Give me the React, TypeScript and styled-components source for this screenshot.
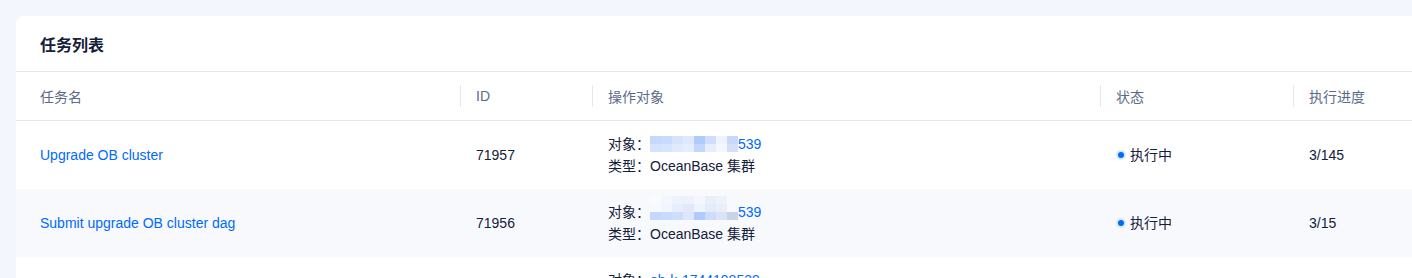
import React from 'react';
import styled, { createGlobalStyle } from 'styled-components';

const GlobalStyle = createGlobalStyle`
  html, body {
    margin: 0;
    padding: 0;
    overflow: hidden;
    background: #f3f6fc;
  }
  body {
    font-family: "Liberation Sans", "Noto Sans CJK SC", sans-serif;
    font-size: 14px;
    color: #132039;
  }
`;

const Page = styled.div`
  padding: 16px 0 0 16px;
  height: 262px;
`;

const Card = styled.div`
  width: 1600px;
  background: #fff;
  border-radius: 8px 8px 0 0;
`;

const CardHeader = styled.div`
  display: flex;
  align-items: center;
  height: 55px;
  padding: 0 24px;
  border-bottom: 1px solid #e2e8f3;
  font-size: 16px;
  font-weight: 700;
  color: #132039;
`;

const Grid = styled.div`
  display: grid;
  grid-template-columns: 444px 132px 508px 193px 1fr;
`;

const HeadCell = styled.div<{ first?: boolean }>`
  position: relative;
  display: flex;
  align-items: center;
  height: 48px;
  padding-left: ${p => (p.first ? '24px' : '16px')};
  border-bottom: 1px solid #e2e8f3;
  color: #5c6b8a;

  &::before {
    content: '';
    display: ${p => (p.first ? 'none' : 'block')};
    position: absolute;
    left: 0;
    top: 50%;
    width: 1px;
    height: 22px;
    transform: translateY(-50%);
    background: #e2e8f3;
  }
`;

const BodyCell = styled.div<{ first?: boolean; striped?: boolean }>`
  display: flex;
  flex-direction: column;
  justify-content: center;
  min-height: 44px;
  padding: 12px 0 12px ${p => (p.first ? '24px' : '16px')};
  line-height: 22px;
  background: ${p => (p.striped ? '#f8f9fd' : '#fff')};
`;

const Link = styled.a`
  color: #006aff;
  text-decoration: none;
  cursor: pointer;
`;

const Line = styled.div`
  display: flex;
  align-items: center;
  white-space: nowrap;
`;

const Mosaic = styled.span<{ lift: number }>`
  display: inline-grid;
  grid-template-columns: repeat(8, 11px);
  grid-auto-rows: 8px;
  align-self: center;
  margin-top: ${p => -p.lift}px;
`;

const Pixel = styled.span<{ c: string }>`
  background: ${p => p.c};
`;

const Status = styled.div`
  display: flex;
  align-items: center;
  gap: 6px;
`;

const Dot = styled.span`
  width: 6px;
  height: 6px;
  border-radius: 50%;
  background: #006aff;
  box-shadow: 0 0 0 2px #dbe8ff;
  margin-left: 2px;
`;

interface Task {
  name: string;
  id: string;
  target: string;
  mosaic?: string[];
  progress: string;
}

const mosaicA = [
  '#c5d8fd', '#c8dafd', '#d6e3fd', '#dfe9fd', '#b0cbfb', '#d0defd', '#eef3fe', '#c6d9fd',
  '#d3e2fe', '#d6e4fe', '#e0eafe', '#e6eefe', '#c3d6fc', '#e6eefe', '#f4f7fd', '#d3e0f7',
];

const mosaicB = [
  '#fafbfe', '#f3f6fd', '#eef2fc', '#edf1fb', '#f3f6fd', '#e9eef9', '#eef2fb', '#f8f9fd',
  '#f8f9fd', '#f2f5fd', '#e6edfb', '#e0e8fa', '#eef3fc', '#e4ebf9', '#e9eef9', '#f8f9fd',
  '#c4d7fc', '#c8dafd', '#cddefd', '#dce7fd', '#b0cbfb', '#cddcfa', '#dbe4f6', '#c9d3e6',
];

const tasks: Task[] = [
  { name: 'Upgrade OB cluster', id: '71957', target: '539', mosaic: mosaicA, progress: '3/145' },
  { name: 'Submit upgrade OB cluster dag', id: '71956', target: '539', mosaic: mosaicB, progress: '3/15' },
  { name: 'Upgrade OB cluster', id: '71955', target: 'ob-k-1744198539', progress: '3/8' },
];

const columns = ['任务名', 'ID', '操作对象', '状态', '执行进度'];

const App = () => {
  return (
    <>
      <GlobalStyle />
      <Page>
        <Card>
          <CardHeader>任务列表</CardHeader>
          <Grid>
            {columns.map((col, i) => (
              <HeadCell key={col} first={i === 0}>
                {col}
              </HeadCell>
            ))}
            {tasks.map((task, index) => {
              const striped = index % 2 === 1;
              return (
                <React.Fragment key={task.id}>
                  <BodyCell first striped={striped}>
                    <Link>{task.name}</Link>
                  </BodyCell>
                  <BodyCell striped={striped}>{task.id}</BodyCell>
                  <BodyCell striped={striped}>
                    <Line>
                      对象：
                      {task.mosaic && (
                        <Mosaic lift={task.mosaic.length > 16 ? 8 : 0}>
                          {task.mosaic.map((c, i) => (
                            <Pixel key={i} c={c} />
                          ))}
                        </Mosaic>
                      )}
                      <Link>{task.target}</Link>
                    </Line>
                    <Line>类型：OceanBase 集群</Line>
                  </BodyCell>
                  <BodyCell striped={striped}>
                    <Status>
                      <Dot />
                      执行中
                    </Status>
                  </BodyCell>
                  <BodyCell striped={striped}>{task.progress}</BodyCell>
                </React.Fragment>
              );
            })}
          </Grid>
        </Card>
      </Page>
    </>
  );
};

export default App;
